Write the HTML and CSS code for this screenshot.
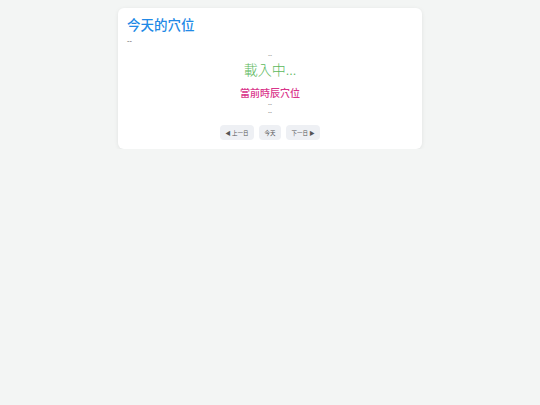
FILE: index.html
```html
<!DOCTYPE html>
<html lang="zh-Hant">
<head>
  <meta charset="UTF-8">
  <meta name="viewport" content="width=device-width, initial-scale=1.0">
  <title>今天的穴位</title>
  <link rel="stylesheet" href="styles.css">
</head>
<body>
  <div class="point-card">
    <h1 class="point-title">今天的穴位</h1>
    <div class="point-date">--</div>
    <div class="point-main">
      <div class="point-meridian">--</div>
      <div class="point-name">載入中...</div>
    </div>
    <div class="hour-block">
      <h2 class="hour-title">當前時辰穴位</h2>
      <div class="hour-line">--</div>
      <div class="hour-line">--</div>
    </div>
    <div class="nav-row">
      <button class="nav-btn" id="prev-btn">◀ 上一日</button>
      <button class="nav-btn" id="today-btn">今天</button>
      <button class="nav-btn" id="next-btn">下一日 ▶</button>
    </div>
  </div>
</body>
</html>
```

FILE: styles.css
```css
/* General Styling */
body {
  font-family: "Noto Sans CJK TC", "Noto Sans", sans-serif;
  margin: 0;
  padding: 8px 0 0;
  background-color: #f3f5f4;
  color: #555;
}

.point-card {
  width: 286px;
  margin: 0 auto;
  background-color: #fff;
  padding: 6px 9px 9px;
  border-radius: 6px;
  box-shadow: 0 1px 4px rgba(0, 0, 0, 0.08);
}

.point-title {
  font-size: 13.5px;
  font-weight: 500;
  line-height: 20px;
  color: #2189e6;
  margin: 0;
}

.point-date {
  font-size: 7px;
  line-height: 10px;
  margin-top: 1px;
  color: #444;
}

.point-main {
  text-align: center;
  margin-top: 5px;
}

.point-meridian {
  font-size: 6px;
  line-height: 9px;
  color: #666;
}

.point-name {
  font-size: 14px;
  font-weight: 300;
  line-height: 20px;
  color: #5cb85c;
}

.hour-block {
  text-align: center;
  margin-top: 6px;
}

.hour-title {
  font-size: 10px;
  font-weight: 500;
  line-height: 15px;
  color: #d9348a;
  margin: 0;
}

.hour-line {
  font-size: 5.5px;
  line-height: 8px;
  color: #333;
}

.nav-row {
  display: flex;
  justify-content: center;
  gap: 5px;
  margin-top: 9px;
}

.nav-btn {
  font-family: inherit;
  font-size: 5.5px;
  height: 15px;
  padding: 0 5.5px;
  border: none;
  border-radius: 4px;
  background-color: #eef0f4;
  color: #555;
  cursor: pointer;
}

.nav-btn:hover {
  background-color: #e2e6ec;
}
```
